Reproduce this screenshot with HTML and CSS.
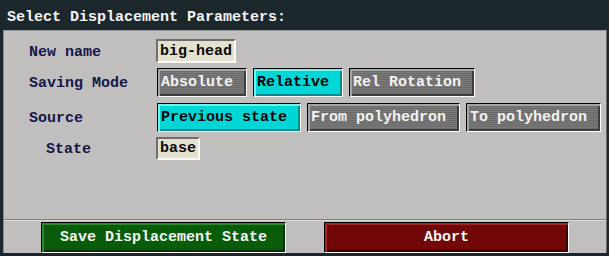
FILE: index.html
```html
<!DOCTYPE html>
<html lang="en">
<head>
    <meta charset="UTF-8">
    <title>Select Displacement Parameters</title>
    <link rel="stylesheet" href="styles.css">
</head>
<body>
    <div class="dialog">
        <div class="title">Select Displacement Parameters:</div>

        <div class="panel">
            <div class="form">
                <div class="row row-name">
                    <span class="label">New name</span>
                    <span class="field">big-head</span>
                </div>
                <div class="row row-mode">
                    <span class="label">Saving Mode</span>
                    <div class="choices">
                        <button class="opt">Absolute</button>
                        <button class="opt on">Relative</button>
                        <button class="opt">Rel Rotation</button>
                    </div>
                </div>
                <div class="row row-source">
                    <span class="label">Source</span>
                    <div class="choices">
                        <button class="opt on">Previous state</button>
                        <button class="opt">From polyhedron</button>
                        <button class="opt">To polyhedron</button>
                    </div>
                </div>
                <div class="row row-state">
                    <span class="label sub">State</span>
                    <span class="field">base</span>
                </div>
            </div>

            <div class="actions">
                <button class="act save">Save Displacement State</button>
                <button class="act abort">Abort</button>
            </div>
        </div>
    </div>
</body>
</html>
```

FILE: styles.css
```css
body {
    margin: 0;
    background-color: #1b272b;
    font-family: 'Liberation Mono', 'DejaVu Sans Mono', monospace;
    font-size: 15px;
    font-weight: bold;
}

.dialog {
    width: 609px;
    height: 256px;
}

.title {
    height: 28px;
    padding: 2px 0 0 7px;
    line-height: 31px;
    color: #f4f4f4;
    white-space: pre;
}

.panel {
    margin: 0 2px 0 3px;
    height: 222px;
    display: flex;
    flex-direction: column;
    background-color: #c3bfbe;
    background-image: repeating-conic-gradient(#cbc7c4 0 25%, #b9b6b9 0 50%);
    background-size: 2px 2px;
    border-top: 1px solid #9a9898;
    border-left: 1px solid #8c8a8a;
    border-right: 1px solid #6c6a6a;
}

.form {
    height: 181px;
    padding: 8px 0 0 25px;
    border-bottom: 1px solid #7e7c7c;
}

.row {
    display: flex;
    align-items: center;
}

.label {
    width: 127px;
    padding-top: 2px;
    color: #15164a;
}

.label.sub {
    width: 110px;
    padding-left: 17px;
}

.row-name { height: 24px; }
.row-mode { height: 29px; margin-top: 5px; }
.row-source { height: 29px; margin-top: 6px; }
.row-state { height: 23px; margin-top: 5px; }

.field {
    height: 20px;
    line-height: 21px;
    padding: 0 2px 0 2px;
    background-color: #e4e1cf;
    color: #0a0a0a;
    border: 2px solid;
    border-color: #6e6c6c #fbfbfb #fbfbfb #6e6c6c;
}

.row-state .field {
    height: 19px;
    line-height: 20px;
}

.choices {
    display: flex;
    gap: 6px;
    margin-left: 1px;
}

button {
    font-family: inherit;
    font-size: 15px;
    font-weight: bold;
    margin: 0;
    cursor: pointer;
}

.opt {
    height: 29px;
    line-height: 26px;
    padding: 1px 13px 0 3px;
    text-align: left;
    white-space: pre;
    color: #f2f2f2;
    border: 1px solid;
    border-color: #000 #fff #fff #000;
    background-color: #717171;
    background-image: repeating-linear-gradient(#6a6a6a 0 1px, #7b7b7b 1px 2px);
    box-shadow: inset 2px 2px 0 #a4a4a4, inset -2px -2px 0 #3e3e3e;
}

.opt.on {
    color: #050505;
    background-color: #00d6d6;
    background-image: none;
    box-shadow: inset 2px 2px 0 #6ef2f2, inset -2px -2px 0 #008a8a;
}

.actions {
    display: flex;
    gap: 38px;
    padding: 1px 0 0 37px;
    border-top: 1px solid #dedcdc;
}

.act {
    width: 245px;
    height: 31px;
    line-height: 30px;
    padding: 0;
    color: #f4f4f4;
    border: 1px solid;
    border-color: #000 #fff #fff #000;
}

.save {
    background-color: #0c5a0e;
    background-image: repeating-conic-gradient(#0e6410 0 25%, #0a4c0c 0 50%);
    background-size: 2px 2px;
    box-shadow: inset 2px 2px 0 #2d8a2d, inset -2px -2px 0 #03300a;
}

.abort {
    background-color: #7a0404;
    background-image: repeating-conic-gradient(#840606 0 25%, #680202 0 50%);
    background-size: 2px 2px;
    box-shadow: inset 2px 2px 0 #a82424, inset -2px -2px 0 #3c0000;
}
```
